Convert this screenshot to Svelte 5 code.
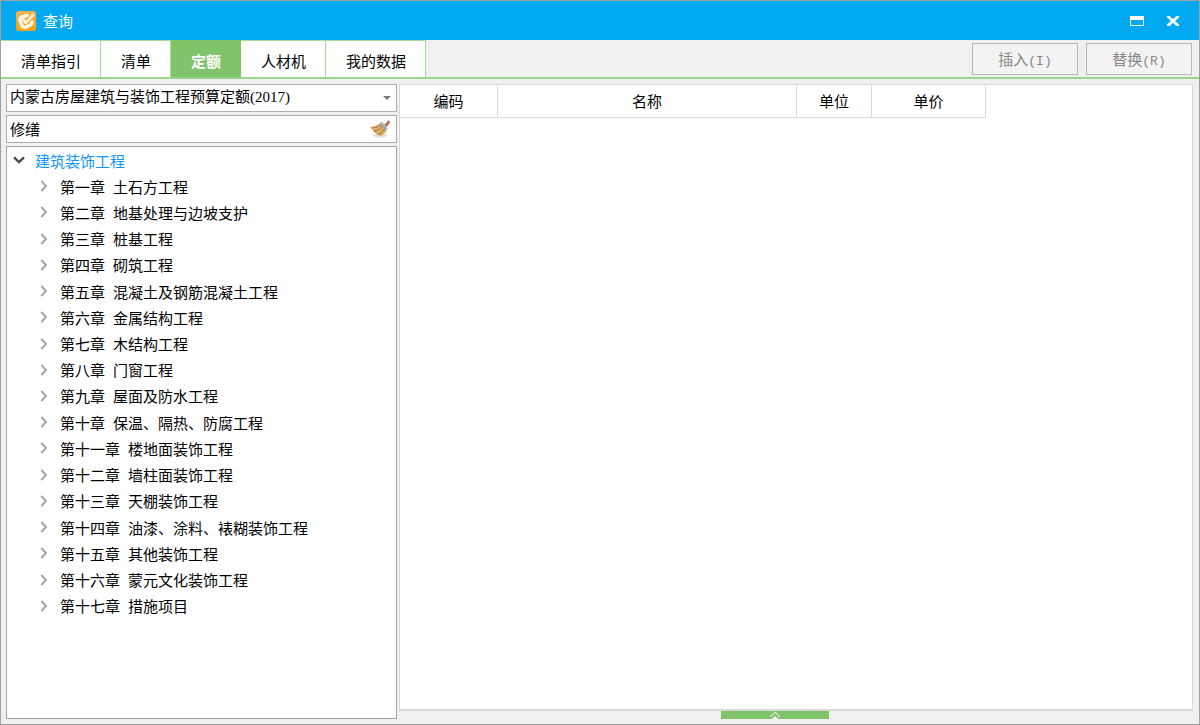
<script>
    const tabs = ['清单指引', '清单', '定额', '人材机', '我的数据'];
    let activeTab = '定额';

    const libraries = ['内蒙古房屋建筑与装饰工程预算定额(2017)'];
    let library = libraries[0];
    let keyword = '修缮';

    const columns = [
        { key: 'code', label: '编码' },
        { key: 'name', label: '名称' },
        { key: 'unit', label: '单位' },
        { key: 'price', label: '单价' }
    ];

    const chapters = [
        ['第一章', '土石方工程'],
        ['第二章', '地基处理与边坡支护'],
        ['第三章', '桩基工程'],
        ['第四章', '砌筑工程'],
        ['第五章', '混凝土及钢筋混凝土工程'],
        ['第六章', '金属结构工程'],
        ['第七章', '木结构工程'],
        ['第八章', '门窗工程'],
        ['第九章', '屋面及防水工程'],
        ['第十章', '保温、隔热、防腐工程'],
        ['第十一章', '楼地面装饰工程'],
        ['第十二章', '墙柱面装饰工程'],
        ['第十三章', '天棚装饰工程'],
        ['第十四章', '油漆、涂料、裱糊装饰工程'],
        ['第十五章', '其他装饰工程'],
        ['第十六章', '蒙元文化装饰工程'],
        ['第十七章', '措施项目']
    ];

    let expanded = true;
</script>

<div class="window">
    <header class="titlebar">
        <svg class="logo" viewBox="0 0 20 20">
            <defs>
                <linearGradient id="logo-bg" x1="0" y1="0" x2="0" y2="1">
                    <stop offset="0" stop-color="#f3b252" />
                    <stop offset="1" stop-color="#fba20c" />
                </linearGradient>
            </defs>
            <rect width="20" height="20" rx="3" fill="url(#logo-bg)" />
            <path d="M11 4.500 4.800 6.200 3.800 9 6.500 15.500 9 16.500 15 13.500 16 11" fill="none" stroke="#fff8ec" stroke-width="3.400" stroke-linejoin="round" stroke-linecap="round" />
            <path d="M7.500 8.500 9.700 12 16.800 4" fill="none" stroke="#fff8ec" stroke-width="2.600" stroke-linejoin="round" stroke-linecap="round" />
            <path d="M10 9.500 14.500 4.500" stroke="#f2b45c" stroke-width=".9" />
        </svg>
        <h1>查询</h1>
        <button class="win-btn" aria-label="最大化">
            <svg viewBox="0 0 14 10" width="14" height="10">
                <path d="M0 0h14v10H0zM1 4v5h12V4z" fill="#fff" fill-rule="evenodd" />
            </svg>
        </button>
        <button class="win-btn" aria-label="关闭">
            <svg viewBox="0 0 14 10" width="14" height="10">
                <path d="M1.500 0 12.500 10M12.500 0 1.500 10" stroke="#fff" stroke-width="2.800" />
            </svg>
        </button>
    </header>

    <div class="toolbar">
        <nav class="tabs">
            {#each tabs as tab}
                <button class="tab" class:active={tab === activeTab} on:click={() => (activeTab = tab)}>{tab}</button>
            {/each}
        </nav>
        <div class="actions">
            <button class="action" disabled>插入<span class="hotkey">(I)</span></button>
            <button class="action" disabled>替换<span class="hotkey">(R)</span></button>
        </div>
    </div>

    <main class="content">
        <aside class="sidebar">
            <div class="field">
                <select bind:value={library} aria-label="定额库">
                    {#each libraries as item}
                        <option value={item}>{item}</option>
                    {/each}
                </select>
                <svg class="arrow" viewBox="0 0 8 4" width="8" height="4">
                    <path d="M0 0h8L4 4z" fill="#727b8a" />
                </svg>
            </div>
            <div class="field">
                <input type="text" bind:value={keyword} aria-label="关键字" />
                <button class="clear" aria-label="清除" on:click={() => (keyword = '')}>
                    <svg viewBox="0 0 22 18" width="22" height="18">
                        <ellipse cx="11" cy="15.500" rx="7" ry="2" fill="#e2e0de" />
                        <path d="M14.500 4.500 17.500 3 18.500 .8q1.500-.8 2.300.6T19.500 4.500L17.500 7.500z" fill="#b9714c" />
                        <path d="M11 3.500Q7 6.500 1.500 7 2.500 9.500 4 10.500q.5 2 2.500 2.500 2 2.500 5 3 4.500-2 6-6z" fill="#d0a45e" />
                        <path d="M3 8q5-.3 9-2.500M5 11.500q5-1.500 8-4.500M9 14.500q4-2 6-5.500" fill="none" stroke="#a87a3b" stroke-width=".7" />
                        <path d="M4 9.500q4-.5 8-3M7.500 13q4-2 6.500-5" fill="none" stroke="#e8c98b" stroke-width=".7" />
                        <path d="M11.500 3Q15.500 5 17.500 9.800" fill="none" stroke="#8e949c" stroke-width="2.800" />
                        <path d="M12 2.800Q16 5 18 9.300" fill="none" stroke="#c9cfd6" stroke-width="1.200" />
                    </svg>
                </button>
            </div>
            <div class="tree">
                <button class="node root" aria-expanded={expanded} on:click={() => (expanded = !expanded)}>
                    <svg viewBox="0 0 12 8" width="12" height="8">
                        <path d="M1 1.300 6 6 11 1.300" fill="none" stroke="#4a4a4a" stroke-width="2.400" />
                    </svg>
                    建筑装饰工程
                </button>
                {#if expanded}
                    <ul class="chapters">
                        {#each chapters as [no, title]}
                            <li>
                                <button class="node">
                                    <svg viewBox="0 0 8 12" width="8" height="12">
                                        <path d="M1.300 1 6 6l-4.700 5" fill="none" stroke="#a6a6a6" stroke-width="2" />
                                    </svg>
                                    <span>{no}</span>
                                    <span>{title}</span>
                                </button>
                            </li>
                        {/each}
                    </ul>
                {/if}
            </div>
        </aside>

        <section class="result">
            <div class="grid-box">
                <table>
                    <thead>
                        <tr>
                            {#each columns as col}
                                <th class={col.key}>{col.label}</th>
                            {/each}
                        </tr>
                    </thead>
                </table>
            </div>
            <div class="footer">
                <button class="handle" aria-label="展开">
                    <svg viewBox="0 0 12 8" width="12" height="8">
                        <path d="M1 6 6 1.500 11 6" fill="none" stroke="#c5e6bb" stroke-width="1.500" />
                        <path d="M3 8 6 5l3 3z" fill="#fff" />
                    </svg>
                </button>
            </div>
        </section>
    </main>
</div>

<style>
    :global(body) {
        margin: 0;
    }

    .window,
    button,
    input,
    select {
        font-family: "Liberation Serif", "Noto Sans CJK SC", serif;
        font-size: 15px;
        color: #000;
    }

    .window {
        box-sizing: border-box;
        min-height: 100vh;
        display: flex;
        flex-direction: column;
        border: 1px solid #a0a0a0;
        background: #f0f0f0;
    }

    button {
        margin: 0;
        padding: 0;
        border: none;
        background: none;
    }

    svg {
        display: block;
        flex: none;
    }

    .titlebar {
        display: flex;
        align-items: center;
        height: 39px;
        padding: 0 12px 0 15px;
        background: #02a9f1;
    }

    .logo {
        width: 20px;
        height: 20px;
    }

    h1 {
        flex: 1;
        margin: 0 0 0 7px;
        font-size: 15px;
        font-weight: normal;
        color: #fff;
    }

    .win-btn {
        display: flex;
        align-items: center;
        justify-content: center;
        width: 28px;
        height: 28px;
        margin-left: 8px;
    }

    .toolbar {
        display: flex;
        justify-content: space-between;
        height: 37px;
        border-bottom: 2px solid #9bd48c;
    }

    .tabs {
        display: flex;
    }

    .tab {
        padding: 2px 19px 0 20px;
        border-top: 1px solid #a5df97;
        border-right: 1px solid #a5df97;
        background: #fff;
    }

    .tab.active {
        border-color: #7fc36a;
        background: #7fc36a;
        color: #fff;
        font-weight: bold;
    }

    .actions {
        display: flex;
        align-items: center;
        gap: 8px;
        padding-right: 7px;
    }

    .action {
        width: 106px;
        height: 32px;
        border: 1px solid #b8b8b8;
        background: #f3f3f3;
        color: #888;
    }

    .hotkey {
        font-family: "Liberation Mono", monospace;
        font-size: 13px;
    }

    .content {
        flex: 1;
        display: flex;
        gap: 2px;
        padding: 5px 6px 5px 5px;
    }

    .sidebar {
        flex: 0 0 391px;
        display: flex;
        flex-direction: column;
        gap: 3px;
    }

    .field {
        box-sizing: border-box;
        display: flex;
        align-items: center;
        height: 28px;
        padding-right: 5px;
        border: 1px solid #abadb3;
        background: #fff;
    }

    .field select,
    .field input {
        flex: 1;
        min-width: 0;
        height: 24px;
        padding: 0 3px 2px;
        border: none;
        outline: none;
        background: none;
        appearance: none;
    }

    .tree {
        flex: 1;
        border: 1px solid #9ea4ac;
        background: #fff;
    }

    .node {
        display: flex;
        align-items: center;
        gap: 8px;
        width: 100%;
        height: 100%;
        padding-left: 33px;
        white-space: nowrap;
    }

    .node svg + span {
        margin-left: 4px;
    }

    .node.root {
        gap: 10px;
        height: 26px;
        padding-left: 6px;
        color: #1296fa;
    }

    /* rows share the list height evenly */
    .chapters {
        display: grid;
        grid-auto-rows: 1fr;
        min-height: 446px;
        margin: 0;
        padding: 0;
        list-style: none;
    }

    .result {
        flex: 1;
        display: flex;
        flex-direction: column;
        min-width: 0;
    }

    .grid-box {
        flex: 1;
        border: 1px solid #d9d9d9;
        border-bottom-width: 2px;
        background: #fff;
    }

    table {
        border-collapse: separate;
        border-spacing: 0;
        table-layout: fixed;
        width: 586px;
    }

    th {
        box-sizing: border-box;
        height: 33px;
        padding: 0 0 2px;
        border-right: 1px solid #d9d9d9;
        border-bottom: 1px solid #d9d9d9;
        font-weight: normal;
    }

    .code {
        width: 98px;
    }

    .name {
        width: 299px;
    }

    .unit {
        width: 75px;
    }

    .price {
        width: 114px;
    }

    .footer {
        display: flex;
        justify-content: center;
        padding-right: 42px;
    }

    .handle {
        display: flex;
        justify-content: center;
        width: 108px;
        height: 8px;
        background: #7fc36a;
    }
</style>
